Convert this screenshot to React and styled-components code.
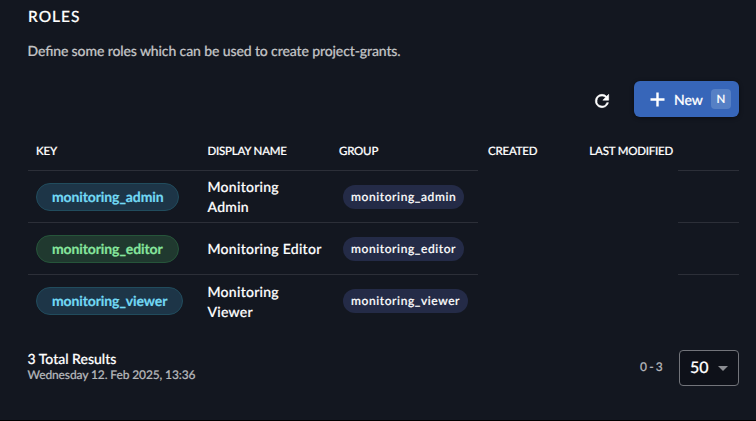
import React from "react";
import styled, { createGlobalStyle } from "styled-components";

const Global = createGlobalStyle`
  * { box-sizing: border-box; }
  body {
    margin: 0;
    background: #131720;
    color: #fff;
    font-family: Lato, "Open Sans", sans-serif;
    font-weight: 500;
    text-rendering: geometricPrecision;
    -webkit-text-stroke: 0.2px currentColor;
  }
  button, kbd { text-rendering: inherit; }
`;

const Page = styled.main`
  height: 421px;
  padding: 6px 17px 0 28px;
  border-bottom: 1px solid #000;
  overflow: hidden;
`;

const Title = styled.h2`
  margin: 0;
  font-size: 15.5px;
  line-height: 22px;
  font-weight: 500;
  letter-spacing: 1px;
`;

const Description = styled.p`
  margin: 13px 0 0 -0.5px;
  font-size: 14px;
  line-height: 20px;
  letter-spacing: -0.11px;
  font-feature-settings: "liga" 1;
  color: #c2c3c5;
`;

const Toolbar = styled.div`
  display: flex;
  align-items: center;
  justify-content: flex-end;
  gap: 22px;
  height: 36px;
  margin-top: 20px;
`;

const IconButton = styled.button`
  display: flex;
  padding: 0;
  border: 0;
  background: none;
  color: #fff;
  margin-top: 4px;
`;

const NewButton = styled.button`
  display: flex;
  align-items: center;
  width: 105px;
  height: 36px;
  padding: 0 8px 0 16px;
  border: 0;
  border-radius: 6px;
  background: #3766b9;
  color: #fff;
  font: 500 14px Lato, sans-serif;
  box-shadow: 0 1px 4px rgba(0, 0, 0, 0.45);
`;

const NewLabel = styled.span`
  margin: 1px 0 0 9px;
`;

const Shortcut = styled.kbd`
  display: grid;
  place-items: center;
  width: 20px;
  height: 20px;
  margin-left: auto;
  border-radius: 4px;
  background: #5680c5;
  font: 500 11.5px Lato, sans-serif;
`;

const Row = styled.div`
  display: grid;
  grid-template-columns: 171.5px 131.5px 147px 200px 61px;
  height: ${(p) => (p.$header ? 38 : 52)}px;
  margin-top: ${(p) => (p.$header ? 16 : 0)}px;
`;

const Cell = styled.div`
  display: flex;
  align-items: center;
  padding: 0 8px;
  border-bottom: 1px solid ${(p) => (p.$line ? "#2c2f38" : "transparent")};
`;

const HeaderCell = styled(Cell)`
  font-size: 11.5px;
  letter-spacing: -0.22px;
  white-space: nowrap;
  padding-bottom: 1px;
`;

const DateHeaders = styled(HeaderCell)`
  padding-left: 10px;
  justify-content: space-between;
  padding-right: 5px;
`;

const NameText = styled.span`
  width: 120px;
  font-size: 14px;
  line-height: 20px;
  letter-spacing: 0.27px;
`;

const NameCell = styled(Cell)`
  padding-right: 6px;
  padding-top: ${(p) => (p.$line ? 1 : 2)}px;
`;

const RoleKey = styled.span`
  height: 28px;
  padding: 0 15px;
  border: 1px solid ${(p) => (p.$green ? "#26553a" : "#214c5d")};
  border-radius: 14px;
  background: ${(p) => (p.$green ? "#20392f" : "#1d3547")};
  color: ${(p) => (p.$green ? "#86e59d" : "#72d9f4")};
  font-size: 14px;
  line-height: 26px;
  font-weight: 700;
  letter-spacing: -0.11px;
  white-space: nowrap;
`;

const GroupChip = styled.span`
  height: 24px;
  margin-left: 4px;
  padding: 0 8px;
  border-radius: 12px;
  background: #242b47;
  font-size: 12px;
  line-height: 24px;
  letter-spacing: 0.6px;
  white-space: nowrap;
`;

const Footer = styled.footer`
  display: flex;
  align-items: center;
  height: 36px;
  margin-top: 23px;
`;

const Summary = styled.div`
  margin: -4px 0 0 -0.5px;
`;

const Total = styled.div`
  font-size: 14px;
  line-height: 17px;
`;

const Timestamp = styled.div`
  font-size: 12px;
  line-height: 15px;
  letter-spacing: -0.12px;
  color: #b4b6ba;
`;

const Range = styled.span`
  margin-left: auto;
  margin-right: 16px;
  padding-bottom: 3px;
  font-size: 12px;
  color: #b4b6ba;
  letter-spacing: 0.3px;
  word-spacing: -1.5px;
`;

const PageSize = styled.button`
  display: flex;
  align-items: center;
  justify-content: space-between;
  width: 60px;
  height: 36px;
  padding: 0 10px;
  border: 1px solid #72747a;
  border-radius: 4px;
  background: #0e1119;
  color: #fff;
  font: 500 16px Lato, sans-serif;
`;

const SizeValue = styled.span`
  padding-bottom: 1px;
`;

const roles = [
  { key: "monitoring_admin", name: <>Monitoring<br />Admin</> },
  { key: "monitoring_editor", name: "Monitoring Editor", green: true },
  { key: "monitoring_viewer", name: <>Monitoring<br />Viewer</> },
];

export default function App() {
  return (
    <Page>
      <Global />
      <Title>ROLES</Title>
      <Description>Define some roles which can be used to create project-grants.</Description>
      <Toolbar>
        <IconButton aria-label="Refresh">
          <svg width="20" height="20" viewBox="0 0 24 24" fill="currentColor" stroke="currentColor" strokeWidth="0.7">
            <path d="M17.65 6.35A7.96 7.96 0 0 0 12 4a8 8 0 1 0 7.73 10h-2.08A6 6 0 1 1 12 6c1.66 0 3.14.69 4.22 1.78L13 11h7V4z" />
          </svg>
        </IconButton>
        <NewButton>
          <svg width="15" height="15" viewBox="0 0 15 15" fill="none" stroke="currentColor" strokeWidth="2.4">
            <path d="M7.5 0.5v14M0.5 7.5h14" />
          </svg>
          <NewLabel>New</NewLabel>
          <Shortcut>N</Shortcut>
        </NewButton>
      </Toolbar>
      <Row $header>
        <HeaderCell $line>KEY</HeaderCell>
        <HeaderCell $line>DISPLAY NAME</HeaderCell>
        <HeaderCell $line>GROUP</HeaderCell>
        <DateHeaders><span>CREATED</span><span>LAST MODIFIED</span></DateHeaders>
        <HeaderCell $line />
      </Row>
      {roles.map((role, i) => {
        const line = i < roles.length - 1;
        return (
          <Row key={role.key}>
            <Cell $line={line}><RoleKey $green={role.green}>{role.key}</RoleKey></Cell>
            <NameCell $line={line}><NameText>{role.name}</NameText></NameCell>
            <Cell $line={line}><GroupChip>{role.key}</GroupChip></Cell>
            <Cell />
            <Cell $line={line} />
          </Row>
        );
      })}
      <Footer>
        <Summary>
          <Total>3 Total Results</Total>
          <Timestamp>Wednesday 12. Feb 2025, 13:36</Timestamp>
        </Summary>
        <Range>0 - 3</Range>
        <PageSize>
          <SizeValue>50</SizeValue>
          <svg width="10" height="5" viewBox="0 0 10 5" fill="#8b8d92"><path d="M0 0h10L5 5z" /></svg>
        </PageSize>
      </Footer>
    </Page>
  );
}
